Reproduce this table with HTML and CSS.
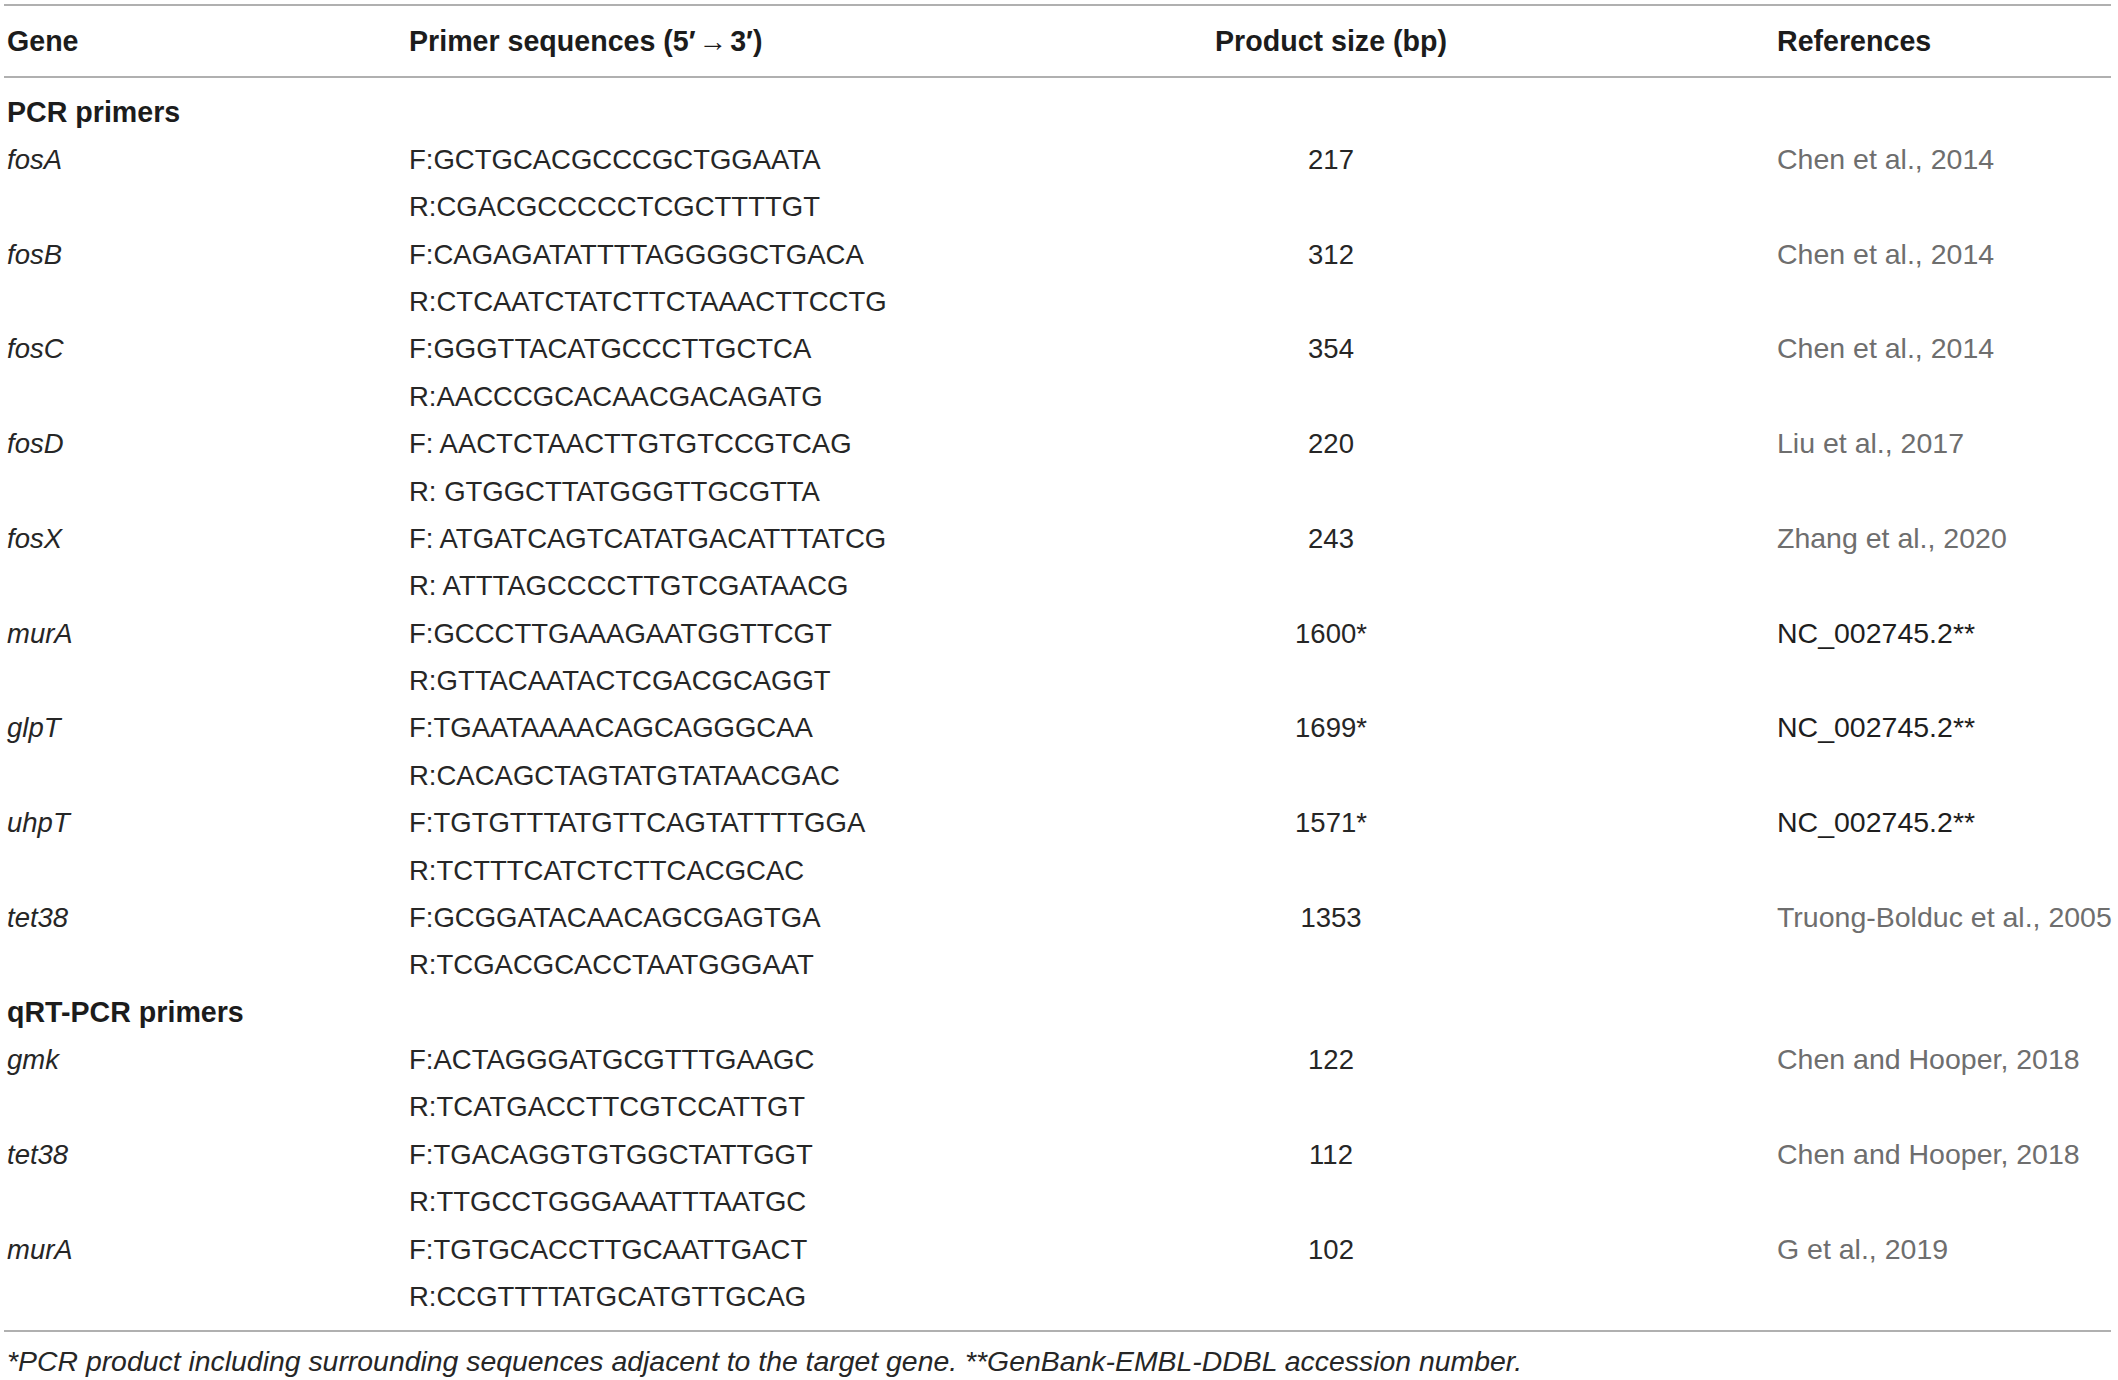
FILE: index.html
```html
<!DOCTYPE html>
<html lang="en">
<head>
<meta charset="utf-8">
<title>Primers</title>
<link rel="stylesheet" href="styles.css">
</head>
<body>
<div class="table">
  <div class="grid head">
    <div class="c gene">Gene</div>
    <div class="c">Primer sequences (5′<span class="arrow">→</span>3′)</div>
    <div class="c size">Product size (bp)</div>
    <div class="c ref">References</div>
  </div>
  <div class="grid body">
    <div class="section">PCR primers</div>

    <div class="c gene"><i>fosA</i></div>
    <div class="c seq"><div>F:GCTGCACGCCCGCTGGAATA</div><div>R:CGACGCCCCCTCGCTTTTGT</div></div>
    <div class="c size">217</div>
    <div class="c ref link">Chen et al., 2014</div>

    <div class="c gene"><i>fosB</i></div>
    <div class="c seq"><div>F:CAGAGATATTTTAGGGGCTGACA</div><div>R:CTCAATCTATCTTCTAAACTTCCTG</div></div>
    <div class="c size">312</div>
    <div class="c ref link">Chen et al., 2014</div>

    <div class="c gene"><i>fosC</i></div>
    <div class="c seq"><div>F:GGGTTACATGCCCTTGCTCA</div><div>R:AACCCGCACAACGACAGATG</div></div>
    <div class="c size">354</div>
    <div class="c ref link">Chen et al., 2014</div>

    <div class="c gene"><i>fosD</i></div>
    <div class="c seq"><div>F: AACTCTAACTTGTGTCCGTCAG</div><div>R: GTGGCTTATGGGTTGCGTTA</div></div>
    <div class="c size">220</div>
    <div class="c ref link">Liu et al., 2017</div>

    <div class="c gene"><i>fosX</i></div>
    <div class="c seq"><div>F: ATGATCAGTCATATGACATTTATCG</div><div>R: ATTTAGCCCCTTGTCGATAACG</div></div>
    <div class="c size">243</div>
    <div class="c ref link">Zhang et al., 2020</div>

    <div class="c gene"><i>murA</i></div>
    <div class="c seq"><div>F:GCCCTTGAAAGAATGGTTCGT</div><div>R:GTTACAATACTCGACGCAGGT</div></div>
    <div class="c size">1600*</div>
    <div class="c ref">NC_002745.2**</div>

    <div class="c gene"><i>glpT</i></div>
    <div class="c seq"><div>F:TGAATAAAACAGCAGGGCAA</div><div>R:CACAGCTAGTATGTATAACGAC</div></div>
    <div class="c size">1699*</div>
    <div class="c ref">NC_002745.2**</div>

    <div class="c gene"><i>uhpT</i></div>
    <div class="c seq"><div>F:TGTGTTTATGTTCAGTATTTTGGA</div><div>R:TCTTTCATCTCTTCACGCAC</div></div>
    <div class="c size">1571*</div>
    <div class="c ref">NC_002745.2**</div>

    <div class="c gene"><i>tet38</i></div>
    <div class="c seq"><div>F:GCGGATACAACAGCGAGTGA</div><div>R:TCGACGCACCTAATGGGAAT</div></div>
    <div class="c size">1353</div>
    <div class="c ref link">Truong-Bolduc et al., 2005</div>

    <div class="section">qRT-PCR primers</div>

    <div class="c gene"><i>gmk</i></div>
    <div class="c seq"><div>F:ACTAGGGATGCGTTTGAAGC</div><div>R:TCATGACCTTCGTCCATTGT</div></div>
    <div class="c size">122</div>
    <div class="c ref link">Chen and Hooper, 2018</div>

    <div class="c gene"><i>tet38</i></div>
    <div class="c seq"><div>F:TGACAGGTGTGGCTATTGGT</div><div>R:TTGCCTGGGAAATTTAATGC</div></div>
    <div class="c size">112</div>
    <div class="c ref link">Chen and Hooper, 2018</div>

    <div class="c gene"><i>murA</i></div>
    <div class="c seq"><div>F:TGTGCACCTTGCAATTGACT</div><div>R:CCGTTTTATGCATGTTGCAG</div></div>
    <div class="c size">102</div>
    <div class="c ref link">G et al., 2019</div>
  </div>
  <p class="note">*PCR product including surrounding sequences adjacent to the target gene. **GenBank-EMBL-DDBL accession number.</p>
</div>
</body>
</html>
```

FILE: styles.css
```css
html, body {
  margin: 0;
  padding: 0;
  background: #ffffff;
}
body {
  font-family: "Liberation Sans", Arial, sans-serif;
  color: #262626;
  font-size: 27.5px;
}
.table {
  width: 2107px;
  margin-left: 4px;
  padding-top: 4px;
}
.grid {
  display: grid;
  grid-template-columns: 405px 650px 544px 1fr;
}
.head {
  border-top: 2px solid #b0b0b0;
  border-bottom: 2px solid #b0b0b0;
  height: 70px;
  line-height: 70px;
  font-weight: bold;
  font-size: 28.6px;
  color: #1c1c1c;
}
.arrow {
  padding: 0 3px;
}
.body {
  padding-top: 10.6px;
  padding-bottom: 9.3px;
  border-bottom: 2px solid #b0b0b0;
  line-height: 47.38px;
}
.c {
  white-space: nowrap;
}
.gene {
  padding-left: 3px;
}
.gene i {
  font-style: italic;
}
.size {
  text-align: center;
}
.ref {
  padding-left: 174px;
  color: #1e1e1e;
  font-size: 28.5px;
}
.head .ref {
  font-size: 28.6px;
  color: #1c1c1c;
}
.ref.link {
  color: #6e6e6e;
}
.section {
  grid-column: 1 / -1;
  padding-left: 3px;
  font-weight: bold;
  font-size: 28.6px;
  color: #1c1c1c;
}
.note {
  margin: 9px 0 0 3px;
  line-height: 40px;
  font-style: italic;
  font-size: 28.4px;
  color: #262626;
  white-space: nowrap;
}
```
